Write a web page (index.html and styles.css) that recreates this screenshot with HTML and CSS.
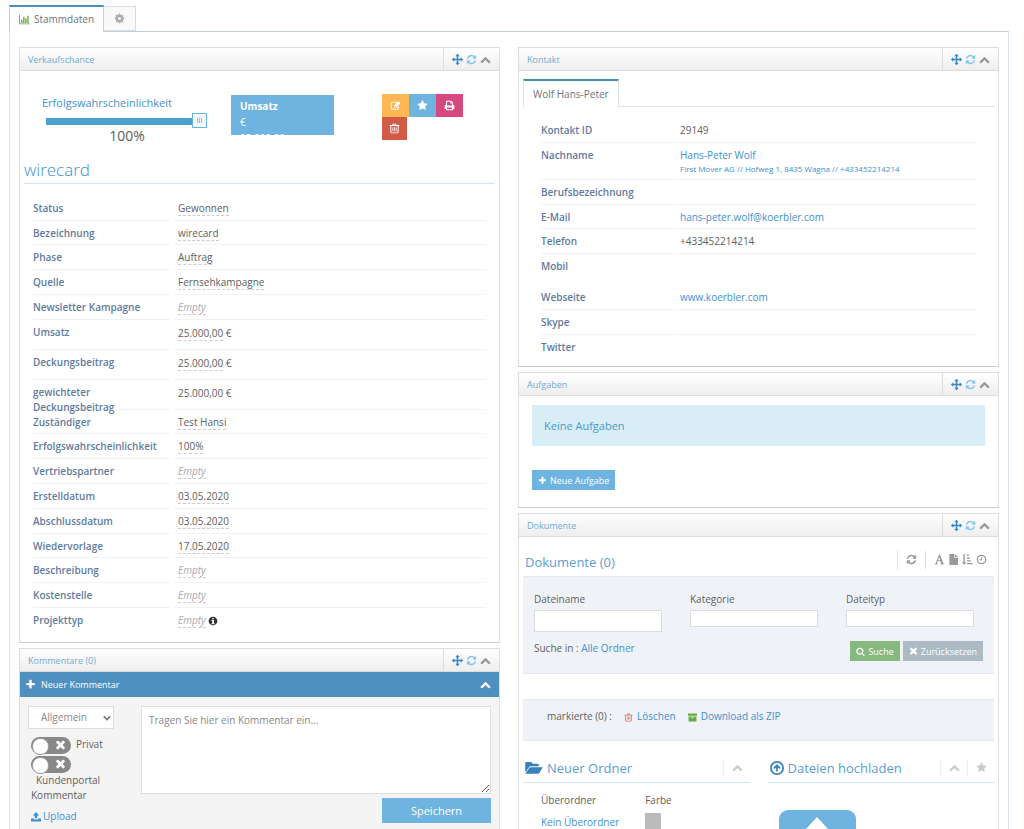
FILE: index.html
```html
<!DOCTYPE html>
<html lang="de">
<head>
<meta charset="utf-8">
<title>Stammdaten</title>
<link rel="stylesheet" href="styles.css">
</head>
<body>
<svg class="sprite" aria-hidden="true">
  <symbol id="move" viewBox="0 0 1792 1792"><path d="M1792 896q0 26-19 45l-256 256q-19 19-45 19t-45-19-19-45v-128h-384v384h128q26 0 45 19t19 45-19 45l-256 256q-19 19-45 19t-45-19l-256-256q-19-19-19-45t19-45 45-19h128v-384h-384v128q0 26-19 45t-45 19-45-19l-256-256q-19-19-19-45t19-45l256-256q19-19 45-19t45 19 19 45v128h384v-384h-128q-26 0-45-19t-19-45 19-45l256-256q19-19 45-19t45 19l256 256q19 19 19 45t-19 45-45 19h-128v384h384v-128q0-26 19-45t45-19 45 19l256 256q19 19 19 45z"/></symbol>
  <symbol id="refresh" viewBox="0 0 1792 1792"><path d="M1639 1056q0 5-1 7-64 268-268 434.500t-478 166.500q-146 0-282.500-55t-243.500-157l-129 129q-19 19-45 19t-45-19-19-45v-448q0-26 19-45t45-19h448q26 0 45 19t19 45-19 45l-137 137q71 66 161 102t187 36q134 0 250-65t186-179q11-17 53-117 8-23 30-23h192q13 0 22.500 9.500t9.500 22.500zm25-800v448q0 26-19 45t-45 19h-448q-26 0-45-19t-19-45 19-45l138-138q-148-137-349-137-134 0-250 65t-186 179q-11 17-53 117-8 23-30 23h-199q-13 0-22.500-9.500t-9.500-22.500v-7q65-268 270-434.500t480-166.500q146 0 284 55.500t245 156.500l130-129q19-19 45-19t45 19 19 45z"/></symbol>
  <symbol id="up" viewBox="0 0 1792 1792"><path d="M1683 1331l-166 165q-19 19-45 19t-45-19l-531-531-531 531q-19 19-45 19t-45-19l-166-165q-19-19-19-45.500t19-45.500l742-741q19-19 45-19t45 19l742 741q19 19 19 45.500t-19 45.500z"/></symbol>
  <symbol id="star" viewBox="0 0 1792 1792"><path d="M1728 647q0 22-26 48l-363 354 86 500q1 7 1 20 0 21-10.500 35.500t-30.500 14.500q-19 0-40-12l-449-236-449 236q-22 12-40 12-21 0-31.500-14.500t-10.500-35.500q0-6 2-20l86-500-364-354q-25-27-25-48 0-37 56-46l502-73 225-455q19-41 49-41t49 41l225 455 502 73q56 9 56 46z"/></symbol>
  <symbol id="plus" viewBox="0 0 1792 1792"><path d="M1600 736v192q0 40-28 68t-68 28h-416v416q0 40-28 68t-68 28h-192q-40 0-68-28t-28-68v-416h-416q-40 0-68-28t-28-68v-192q0-40 28-68t68-28h416v-416q0-40 28-68t68-28h192q40 0 68 28t28 68v416h416q40 0 68 28t28 68z"/></symbol>
  <symbol id="times" viewBox="150 280 1492 1492"><path d="M1490 1322q0 40-28 68l-136 136q-28 28-68 28t-68-28l-294-294-294 294q-28 28-68 28t-68-28l-136-136q-28-28-28-68t28-68l294-294-294-294q-28-28-28-68t28-68l136-136q28-28 68-28t68 28l294 294 294-294q28-28 68-28t68 28l136 136q28 28 28 68t-28 68l-294 294 294 294q28 28 28 68z"/></symbol>
  <symbol id="search" viewBox="0 0 1792 1792"><path d="M1216 832q0-185-131.500-316.500t-316.500-131.500-316.500 131.500-131.500 316.500 131.500 316.500 316.500 131.500 316.500-131.500 131.500-316.500zm512 832q0 52-38 90t-90 38q-54 0-90-38l-343-342q-179 124-399 124-143 0-273.500-55.500t-225-150-150-225-55.500-273.500 55.500-273.500 150-225 225-150 273.500-55.500 273.500 55.500 225 150 150 225 55.500 273.500q0 220-124 399l343 343q37 37 37 90z"/></symbol>
  <symbol id="cog" viewBox="0 0 1792 1792"><path d="M1152 896q0-106-75-181t-181-75-181 75-75 181 75 181 181 75 181-75 75-181zm512-109v222q0 12-8 23t-20 13l-185 28q-19 54-39 91 35 50 107 138 10 12 10 25t-9 23q-27 37-99 108t-94 71q-12 0-26-9l-138-108q-44 23-91 38-16 136-29 186-7 28-36 28h-222q-14 0-24.500-8.500t-11.500-21.500l-28-184q-49-16-90-37l-141 107q-10 9-25 9-14 0-25-11-126-114-165-168-7-10-7-23 0-12 8-23 15-21 51-66.500t54-70.500q-27-50-41-99l-183-27q-13-2-21-12.500t-8-23.500v-222q0-12 8-23t19-13l186-28q14-46 39-92-40-57-107-138-10-12-10-24 0-10 9-23 26-36 98.500-107.500t94.500-71.500q13 0 26 10l138 107q44-23 91-38 16-136 29-186 7-28 36-28h222q14 0 24.500 8.500t11.500 21.500l28 184q49 16 90 37l142-107q9-9 24-9 13 0 25 10 129 119 165 170 7 8 7 22 0 12-8 23-15 21-51 66.500t-54 70.500q26 50 41 98l183 28q13 2 21 12.500t8 23.500z"/></symbol>
  <symbol id="chart" viewBox="0 0 16 16"><path d="M0 1h1.300v12.700H16V15H0zM3 8h2v5H3zM6 4h2v9H6zM9 6h2v7H9zM12 2.500h2V13h-2z"/></symbol>
  <symbol id="trash" viewBox="0 0 16 16"><path fill-rule="evenodd" d="M5.500 1h5l.8 2H15v1.400h-1V13.500L12.700 15H3.300L2 13.500V4.400H1V3h3.700zM6.400 2.200L6 3h4l-.4-.8zM3.400 4.400v8.800l.5.500h8.200l.5-.5V4.400zM5 6h1.200v6H5zm2.400 0h1.200v6H7.400zm2.400 0H11v6H9.800z"/></symbol>
  <symbol id="edit" viewBox="0 0 16 16"><path fill-rule="evenodd" d="M2.700 2.500H11L9.600 3.900H3.200l-.8.800v7.200l.8.800h7.400l.8-.8V9.800L12.800 8.400v4.300l-1.500 1.500H2.500L1 12.700V4zM12.500 1.800l2.800 2.800L9 11H6V8zM7 8.600v1.500h1.500l.5-.5L7.500 8.100z"/></symbol>
  <symbol id="print" viewBox="0 0 16 16"><path fill-rule="evenodd" d="M3 1h7.500L13 3.500V7h.8L15 8.300V13h-2v2H3v-2H1V8.300L2.200 7H3zm1.500 1.400V8h7V5H9.300V2.400zM4.500 11v2.600h7V11z"/></symbol>
  <symbol id="info" viewBox="0 0 16 16"><path fill-rule="evenodd" d="M8 1a7 7 0 1 1 0 14A7 7 0 0 1 8 1zM6.700 3v2h2.600V3zM5.700 6.500V8h1v3.500h-1V13h4.800v-1.500h-1v-5z"/></symbol>
  <symbol id="upload" viewBox="0 0 16 16"><path d="M8 0l5 5.500h-3V10H6V5.500H3zM0 10.300h4.700V12h6.600v-1.700H16V15H0z"/></symbol>
  <symbol id="folder" viewBox="0 0 20 16"><path d="M1 1h6l1.500 2H14q1.500 0 1.500 1.500V6H6.500Q5 6 4 7.500L0 13V2q0-1 1-1zM6.500 7.200H20L16.500 13q-.8 1.500-2.500 1.500H0L4.300 8.400q.8-1.200 2.200-1.200z"/></symbol>
  <symbol id="circleup" viewBox="0 0 16 16"><path fill-rule="evenodd" d="M8 0a8 8 0 1 1 0 16A8 8 0 0 1 8 0zm0 2a6 6 0 1 0 0 12A6 6 0 0 0 8 2zM8 3.500l4.300 4.300-1.300 1.300-2-1.800V12H7V7.300L5 9.100 3.700 7.800z"/></symbol>
  <symbol id="archive" viewBox="0 0 16 16"><path fill-rule="evenodd" d="M0 1h16v4H0zM1 6h14v9H1zm5 1.500v1.300h4V7.500z"/></symbol>
  <symbol id="file" viewBox="0 0 16 16"><path d="M2 0h7v5.500h5.500V16H2zM10 0l4.500 4.500H10z"/></symbol>
  <symbol id="letter" viewBox="0 0 16 16"><path fill-rule="evenodd" d="M7.300 1h1.500l4.700 12.500 1.500.5v1H9v-1l1.500-.5-1-3H5.300l-1 3 1.700.5v1H1v-1l1.500-.5zM7.400 4.200L5.700 9.200h3.500z"/></symbol>
  <symbol id="sort" viewBox="0 0 16 16"><path d="M2 0h2v12h2l-3 4-3-4h2zM7 1h3v2H7zM7 5h4.500v2H7zM7 9h6v2H7zM7 13h8.500v2H7z"/></symbol>
  <symbol id="clock" viewBox="0 0 16 16"><path fill-rule="evenodd" d="M8 1a7 7 0 1 1 0 14A7 7 0 0 1 8 1zm0 1.900a5.100 5.100 0 1 0 0 10.200A5.100 5.100 0 0 0 8 2.900zM7.500 4.500h1.300V9H5V7.700h2.500z"/></symbol>
  <symbol id="bigup" viewBox="0 0 24 24"><path d="M12 0l11 12h-6v12H7V12H1z"/></symbol>
</svg>

<nav class="tabs">
  <a class="tab tab-active" href="#stamm"><svg class="icon green"><use href="#chart"/></svg>Stammdaten</a>
  <a class="tab tab-cog" href="#settings" aria-label="Einstellungen"><svg class="icon"><use href="#cog"/></svg></a>
</nav>

<main class="frame" id="stamm">
  <div class="column">
    <section class="panel">
      <header class="panel-head">
        <h2>Verkaufschance</h2>
        <div class="tools"><svg class="icon c-move"><use href="#move"/></svg><svg class="icon c-ref"><use href="#refresh"/></svg><svg class="icon c-up"><use href="#up"/></svg></div>
      </header>
      <div class="deal-top">
        <div class="chance">
          <label for="chance">Erfolgswahrscheinlichkeit</label>
          <input id="chance" type="range" min="0" max="100" value="100">
          <output for="chance">100%</output>
        </div>
        <div class="revenue"><strong>Umsatz</strong><span>€<br>25.000,00</span></div>
        <div class="actions">
          <button class="act orange" aria-label="Bearbeiten"><svg class="icon"><use href="#edit"/></svg></button>
          <button class="act blue" aria-label="Favorit"><svg class="icon"><use href="#star"/></svg></button>
          <button class="act pink" aria-label="Drucken"><svg class="icon"><use href="#print"/></svg></button>
          <button class="act red" aria-label="Löschen"><svg class="icon"><use href="#trash"/></svg></button>
        </div>
      </div>
      <h1 class="deal-title">wirecard</h1>
      <dl class="info info-deal">
        <div class="row"><dt>Status</dt><dd><span class="edit">Gewonnen</span></dd></div>
        <div class="row tight"><dt>Bezeichnung</dt><dd><span class="edit">wirecard</span></dd></div>
        <div class="row"><dt>Phase</dt><dd><span class="edit">Auftrag</span></dd></div>
        <div class="row"><dt>Quelle</dt><dd><span class="edit">Fernsehkampagne</span></dd></div>
        <div class="row"><dt>Newsletter Kampagne</dt><dd><span class="edit empty">Empty</span></dd></div>
        <div class="row tall"><dt>Umsatz</dt><dd><span class="edit">25.000,00</span> €</dd></div>
        <div class="row tall"><dt>Deckungsbeitrag</dt><dd><span class="edit">25.000,00</span> €</dd></div>
        <div class="row tall"><dt><span class="two-line">gewichteter Deckungsbeitrag</span></dt><dd>25.000,00 €</dd></div>
        <div class="row tight"><dt>Zuständiger</dt><dd><span class="edit">Test Hansi</span></dd></div>
        <div class="row"><dt>Erfolgswahrscheinlichkeit</dt><dd><span class="edit">100%</span></dd></div>
        <div class="row"><dt>Vertriebspartner</dt><dd><span class="edit empty">Empty</span></dd></div>
        <div class="row"><dt>Erstelldatum</dt><dd><span class="edit">03.05.2020</span></dd></div>
        <div class="row"><dt>Abschlussdatum</dt><dd><span class="edit">03.05.2020</span></dd></div>
        <div class="row tight"><dt>Wiedervorlage</dt><dd><span class="edit">17.05.2020</span></dd></div>
        <div class="row"><dt>Beschreibung</dt><dd><span class="edit empty">Empty</span></dd></div>
        <div class="row"><dt>Kostenstelle</dt><dd><span class="edit empty">Empty</span></dd></div>
        <div class="row plain"><dt>Projekttyp</dt><dd><span class="edit empty">Empty</span> <svg class="icon dark"><use href="#info"/></svg></dd></div>
      </dl>
    </section>

    <section class="panel">
      <header class="panel-head">
        <h2>Kommentare (0)</h2>
        <div class="tools"><svg class="icon c-move"><use href="#move"/></svg><svg class="icon c-ref"><use href="#refresh"/></svg><svg class="icon c-up"><use href="#up"/></svg></div>
      </header>
      <form class="comment">
        <div class="comment-bar"><svg class="icon"><use href="#plus"/></svg><span>Neuer Kommentar</span><svg class="icon last"><use href="#up"/></svg></div>
        <div class="comment-body">
          <div class="comment-side">
            <div class="select-wrap"><select aria-label="Kategorie"><option>Allgemein</option></select><svg class="arrow" viewBox="0 0 10 6"><path d="M1 1l4 4 4-4"/></svg></div>
            <div class="switches">
              <label class="switch"><span class="knob"><input type="checkbox"><svg class="icon"><use href="#times"/></svg></span><span>Privat</span></label>
              <label class="switch wrap"><span class="knob"><input type="checkbox"><svg class="icon"><use href="#times"/></svg></span><span class="portal">Kundenportal Kommentar</span></label>
            </div>
            <a class="upload" href="#upload"><svg class="icon"><use href="#upload"/></svg>Upload</a>
          </div>
          <div class="comment-main">
            <textarea aria-label="Kommentar" placeholder="Tragen Sie hier ein Kommentar ein..."></textarea>
            <button class="save" type="button">Speichern</button>
          </div>
        </div>
      </form>
    </section>
  </div>

  <div class="column">
    <section class="panel">
      <header class="panel-head">
        <h2>Kontakt</h2>
        <div class="tools"><svg class="icon c-move"><use href="#move"/></svg><svg class="icon c-ref"><use href="#refresh"/></svg><svg class="icon c-up"><use href="#up"/></svg></div>
      </header>
      <div class="contact-tabs"><a class="tab tab-active" href="#wolf">Wolf Hans-Peter</a></div>
      <dl class="info info-contact" id="wolf">
        <div class="row"><dt>Kontakt ID</dt><dd>29149</dd></div>
        <div class="row double"><dt>Nachname</dt><dd><a href="#p">Hans-Peter Wolf</a><a class="small" href="#c">First Mover AG // Hofweg 1, 8435 Wagna // +433452214214</a></dd></div>
        <div class="row"><dt>Berufsbezeichnung</dt><dd></dd></div>
        <div class="row tight"><dt>E-Mail</dt><dd><a href="#m">hans-peter.wolf@koerbler.com</a></dd></div>
        <div class="row"><dt>Telefon</dt><dd>+433452214214</dd></div>
        <div class="row plain gap"><dt>Mobil</dt><dd></dd></div>
        <div class="row"><dt>Webseite</dt><dd><a href="#w">www.koerbler.com</a></dd></div>
        <div class="row"><dt>Skype</dt><dd></dd></div>
        <div class="row plain"><dt>Twitter</dt><dd></dd></div>
      </dl>
    </section>

    <section class="panel">
      <header class="panel-head">
        <h2>Aufgaben</h2>
        <div class="tools"><svg class="icon c-move"><use href="#move"/></svg><svg class="icon c-ref"><use href="#refresh"/></svg><svg class="icon c-up"><use href="#up"/></svg></div>
      </header>
      <div class="tasks">
        <p class="notice">Keine Aufgaben</p>
        <button class="btn blue"><svg class="icon"><use href="#plus"/></svg>Neue Aufgabe</button>
      </div>
    </section>

    <section class="panel">
      <header class="panel-head">
        <h2>Dokumente</h2>
        <div class="tools"><svg class="icon c-move"><use href="#move"/></svg><svg class="icon c-ref"><use href="#refresh"/></svg><svg class="icon c-up"><use href="#up"/></svg></div>
      </header>
      <div class="docs">
        <div class="docs-head">
          <h3>Dokumente (0)</h3>
          <div class="docs-tools">
            <span class="grp"><svg class="icon"><use href="#refresh"/></svg></span>
            <span class="grp"><svg class="icon"><use href="#letter"/></svg><svg class="icon"><use href="#file"/></svg><svg class="icon"><use href="#sort"/></svg><svg class="icon"><use href="#clock"/></svg></span>
          </div>
        </div>
        <form class="filter">
          <div class="fields">
            <label>Dateiname<input class="high" type="text"></label>
            <label>Kategorie<input type="text"></label>
            <label>Dateityp<input type="text"></label>
          </div>
          <div class="filter-foot">
            <span>Suche in : <a href="#all">Alle Ordner</a></span>
            <span class="buttons">
              <button type="button" class="btn green-btn"><svg class="icon"><use href="#search"/></svg>Suche</button>
              <button type="button" class="btn gray-btn"><svg class="icon"><use href="#times"/></svg>Zurücksetzen</button>
            </span>
          </div>
        </form>
        <div class="marked">
          <span>markierte (0) :</span>
          <a href="#del"><svg class="icon del"><use href="#trash"/></svg>Löschen</a>
          <a href="#zip"><svg class="icon zip"><use href="#archive"/></svg>Download als ZIP</a>
        </div>
        <div class="boxes">
          <section class="box">
            <header class="box-head"><svg class="icon wide"><use href="#folder"/></svg><h3>Neuer Ordner</h3><span class="box-tool"><svg class="icon"><use href="#up"/></svg></span></header>
            <div class="folder-form">
              <div><span>Überordner</span><a href="#parent">Kein Überordner</a></div>
              <div><span>Farbe</span><button class="swatch" aria-label="Farbe"></button></div>
            </div>
          </section>
          <section class="box">
            <header class="box-head"><svg class="icon"><use href="#circleup"/></svg><h3>Dateien hochladen</h3><span class="box-tool"><svg class="icon"><use href="#up"/></svg></span><span class="box-tool"><svg class="icon"><use href="#star"/></svg></span></header>
            <button class="drop" aria-label="Dateien hochladen"><svg><use href="#bigup"/></svg></button>
          </section>
        </div>
      </div>
    </section>
  </div>
</main>
</body>
</html>
```

FILE: styles.css
```css
* { box-sizing: border-box; }
body {
  margin: 0;
  padding: 5px 15px 0 9px;
  height: 100vh;
  overflow: hidden;
  display: flex;
  flex-direction: column;
  background: #fff;
  color: #606060;
  font: 10px/15px "Open Sans", "Noto Sans", sans-serif;
}
h1, h2, h3, p, dl, dd { margin: 0; font-weight: 400; }
a { color: #428fd0; text-decoration: none; }
button, input, select, textarea { font: inherit; border: 0; padding: 0; margin: 0; border-radius: 0; }
.sprite { position: absolute; width: 0; height: 0; }
.icon { width: 11px; height: 11px; fill: currentColor; flex: none; }
.green { color: #69aa46; }

/* tabs */
.tabs { display: flex; height: 26px; }
.tab {
  display: flex;
  align-items: center;
  color: #6b7380;
}
.tab-active {
  position: relative;
  z-index: 1;
  gap: 4px;
  height: 27px;
  padding: 0 9px;
  background: #fff;
  border: 1px solid #c5d0dc;
  border-top: 2px solid #4c8fbd;
  border-bottom: 0;
}
.tab-cog {
  height: 25px;
  margin-top: 1px;
  padding: 0 10px;
  background: #f9f9f9;
  border: 1px solid #d5dde4;
  border-left: 0;
  color: #aaa;
}
.frame {
  flex: 1 0 auto;
  display: grid;
  grid-template-columns: minmax(0, 1fr) minmax(0, 1fr);
  gap: 18px;
  padding: 15px 9px 0;
  border: 1px solid #dbe3ea;
  border-top-color: #c5d0dc;
  border-bottom: 0;
}
.column { display: flex; flex-direction: column; gap: 5px; }

/* panels */
.panel { border: 1px solid #ddd; border-bottom-color: #ccc; }
.panel-head {
  display: flex;
  justify-content: space-between;
  height: 23px;
  background: linear-gradient(#fff, #eee);
  border-bottom: 1px solid #ddd;
}
.panel-head h2 { padding: 4px 8px 3px; font-size: 9px; color: #72aad2; }
.tools {
  display: flex;
  align-items: center;
  gap: 3px;
  padding: 0 8px;
  border-left: 1px solid #ddd;
}
.c-move { color: #3a87c8; }
.c-ref { color: #87c6f5; }
.c-up { color: #999; }

/* deal summary */
.deal-top { display: flex; height: 87px; padding: 23px 0 0 22px; }
.chance { width: 166px; display: flex; flex-direction: column; }
.chance label { font-size: 11px; line-height: 18px; color: #428fd0; }
.chance input {
  appearance: none;
  width: 161px;
  height: 17px;
  margin-left: 4px;
  background: linear-gradient(#4aa1cf, #4aa1cf) 0 6px / 154px 7px no-repeat;
}
.chance input::-webkit-slider-thumb {
  appearance: none;
  width: 15px;
  height: 15px;
  border: 1px solid #6fb3e0;
  background:
    linear-gradient(90deg, #8dbfe5 1px, transparent 1px, transparent 2px, #8dbfe5 2px, #8dbfe5 3px, transparent 3px, transparent 4px, #8dbfe5 4px) 4px 4px / 5px 5px no-repeat,
    #f3f8fc;
}
.chance output { font-size: 14px; line-height: 14px; text-align: center; padding-left: 4px; }
.revenue {
  width: 103px;
  height: 40px;
  margin: 1px 48px 0 23px;
  padding: 3px 9px 0;
  overflow: hidden;
  background: #6fb3e0;
  color: #fff;
}
.revenue strong, .revenue span { display: block; line-height: 16px; }
.actions { display: flex; flex-wrap: wrap; align-content: flex-start; width: 90px; }
.act { width: 27px; height: 23px; display: grid; place-items: center; color: #fff; }
.orange { background: #ffb752; }
.blue { background: #6fb3e0; }
.pink { background: #d6487e; }
.red { width: 25px; background: #d15b47; }
.deal-title {
  margin: 0 4px;
  height: 26px;
  font-size: 17px;
  font-weight: 300;
  line-height: 24px;
  color: #428fd0;
  border-bottom: 1px solid #d5e3ef;
}

/* label / value lists */
.info { display: flex; flex-direction: column; }
.info-deal { padding: 12px 13px 9px; --label: 136px; --gap: 5px; }
.info-contact { padding: 11px 21px 6px 22px; --label: 132px; --gap: 3px; }
.row { display: grid; grid-template-columns: var(--label) 1fr; gap: var(--gap); height: 25px; }
.tight { height: 24px; }
.tall { height: 30px; }
.double { height: 37px; }
.gap { height: 31px; }
.row dt { padding-top: 5px; height: inherit; font-weight: 600; color: #5f7b9e; border-bottom: 1px solid #edf4f8; }
.row dd { padding: 5px 4px 0; height: inherit; border-bottom: 1px solid #edf4f8; }
.two-line { display: block; width: 100px; }
.tall dd { padding-top: 6px; }
.plain dt, .plain dd { border-color: transparent; }
.row dd a { display: block; }
.row dd .small { font-size: 8px; line-height: 12px; }
.edit { border-bottom: 1px dashed #ccc; }
.empty { color: #aaa; font-style: italic; }
.dark { width: 10px; height: 10px; color: #333; vertical-align: -2px; }

/* comments */
.comment { background: #f4f4f4; min-height: 160px; }
.comment-bar { display: flex; align-items: center; gap: 5px; height: 25px; padding: 0 8px 0 5px; background: #4f90c1; color: #fff; font-size: 9px; }
.last { margin-left: auto; }
.comment-body { display: flex; gap: 27px; padding: 9px 8px; }
.comment-side { width: 86px; }
.select-wrap { position: relative; }
.select-wrap select { appearance: none; width: 100%; height: 23px; padding-left: 12px; border: 1px solid #ddd; background: #fff; color: #888; display: block; }
.arrow { position: absolute; right: 3px; top: 9px; width: 8px; height: 6px; fill: none; stroke: #777; stroke-width: 2; }
.switches { padding: 8px 3px 0; }
.switch { display: flex; gap: 5px; line-height: 15px; margin-bottom: 2px; }
.wrap { display: block; margin-bottom: 0; }
.knob { position: relative; display: block; width: 40px; height: 17px; }
.knob input { appearance: none; display: block; width: 40px; height: 17px; padding-top: 1px; border-radius: 9px; background: #888; }
.knob input::before { content: ""; display: block; width: 15px; height: 15px; border-radius: 8px; background: #fff; margin-left: 1px; border: 1px solid #999; }
.knob .icon { position: absolute; left: 24px; top: 3px; color: #fff; }
.portal { display: block; text-indent: 5px; }
.upload { display: flex; align-items: center; gap: 2px; padding: 6px 3px; }
.upload .icon { width: 10px; height: 10px; }
.comment-main { flex: 1; display: flex; flex-direction: column; align-items: flex-end; gap: 4px; }
.comment-main textarea { width: 100%; height: 88px; padding: 6px 7px; border: 1px solid #ddd; background: #fff; }
.comment-main textarea::placeholder { color: #888; }
.save { width: 109px; height: 25px; background: #6fb3e0; color: #fff; font-size: 11px; }

/* contact */
.contact-tabs { margin: 8px 4px 0; height: 28px; display: flex; border-bottom: 1px solid #dbe3ea; }
.contact-tabs .tab-active { height: 28px; border-color: #dbe3ea; border-top-color: #4c8fbd; }

/* tasks */
.tasks { padding: 9px 13px 17px; }
.notice { padding: 13px 12px; margin-bottom: 24px; background: #d9edf7; color: #4b9bbf; font-size: 11px; }
.btn { display: inline-flex; align-items: center; gap: 3px; height: 20px; padding: 0 6px; color: #fff; font-size: 9px; }
.btn .icon { width: 9px; height: 9px; }

/* documents */
.docs { padding: 0 4px; }
.docs-head { display: flex; justify-content: space-between; align-items: center; height: 39px; padding: 0 7px 0 2px; }
.docs-head h3, .box-head h3 { font-size: 13px; line-height: 20px; color: #5b9dd2; }
.docs-head h3 { padding-top: 10px; }
.docs-tools { display: flex; height: 18px; color: #999; margin-top: 6px; }
.grp { display: flex; align-items: center; gap: 3px; padding: 0 8px; border-left: 1px solid #ddd; }
.grp:last-child { padding-right: 0; }
.filter, .marked { background: #eff3f8; border: 1px solid #e5eaf0; border-width: 1px 0; }
.filter { padding: 15px 11px 11px; height: 98px; }
.fields { display: grid; grid-template-columns: repeat(3, 128px); justify-content: space-between; padding-right: 9px; }
.fields label { display: block; line-height: 15px; }
.fields input { display: block; width: 100%; height: 17px; margin-top: 3px; border: 1px solid #ddd; background: #fff; }
.fields input.high { height: 22px; }
.filter-foot { display: flex; justify-content: space-between; align-items: flex-start; padding-top: 9px; }
.buttons { display: flex; gap: 3px; }
.green-btn { background: #87b87f; }
.gray-btn { background: #abbac3; }
.marked { display: flex; gap: 12px; height: 42px; margin: 25px 0 0; padding: 9px 24px; }
.marked a { display: flex; gap: 4px; }
.marked .icon { width: 9px; height: 9px; margin-top: 4px; }
.marked .del { color: #e2705c; }
.zip { color: #69aa46; }
.boxes { display: grid; grid-template-columns: 1fr 1fr; gap: 18px; padding-top: 14px; }
.box-head { display: flex; align-items: center; height: 28px; padding: 0 1px 2px 2px; border-bottom: 1px solid #d5e3ef; color: #3a80b8; gap: 4px; }
.box-head h3 { flex: 1; }
.box-head > .icon { width: 14px; height: 14px; }
.box-head > .wide { width: 18px; }
.box-tool { display: flex; align-items: center; height: 17px; padding: 0 6px 0 8px; border-left: 1px solid #eee; color: #ccc; }
.box-tool + .box-tool { margin-left: -3px; }
.folder-form { display: flex; gap: 26px; padding: 10px 18px; }
.folder-form span, .folder-form a { display: block; line-height: 15px; }
.folder-form a { margin-top: 7px; }
.swatch { display: block; width: 16px; height: 16px; margin-top: 5px; background: #bbb; }
.drop { display: flex; justify-content: center; align-items: flex-start; width: 77px; height: 50px; margin: 27px 0 0 11px; padding-top: 7px; border-radius: 9px; background: #6fb3e0; }
.drop svg { width: 24px; height: 24px; fill: #fff; }
```
